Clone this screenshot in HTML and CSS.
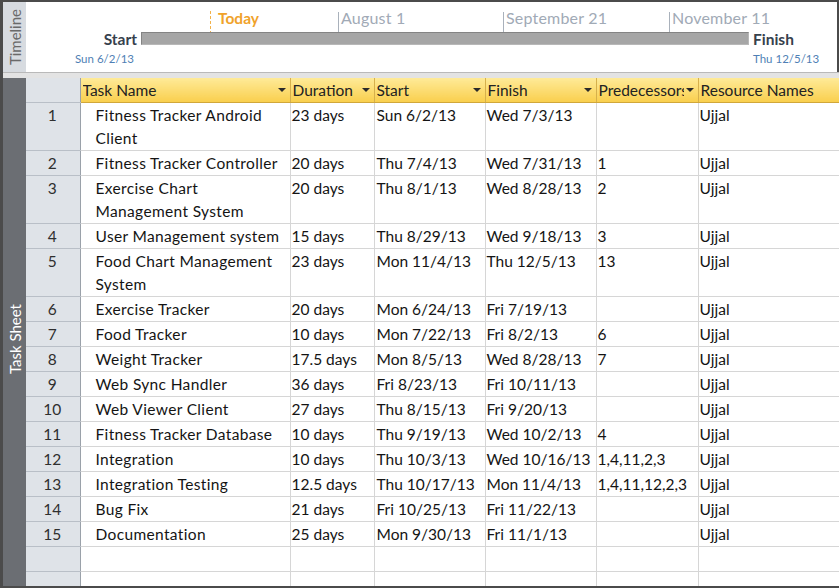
FILE: index.html
```html
<!DOCTYPE html>
<html>
<head>
<meta charset="utf-8">
<link rel="stylesheet" href="styles.css">
</head>
<body>
<div class="app">
  <div class="timeline">
    <div class="side tl-side"><span>Timeline</span></div>
    <div class="tl-canvas">
      <div class="tick today-tick" style="left:184px"></div>
      <div class="tick" style="left:312px"></div>
      <div class="tick" style="left:477px"></div>
      <div class="tick" style="left:643px"></div>
      <span class="tl-today" style="left:192px">Today</span>
      <span class="tl-month" style="left:315px">August 1</span>
      <span class="tl-month" style="left:480px">September 21</span>
      <span class="tl-month" style="left:646px">November 11</span>
      <div class="tl-bar"></div>
      <span class="tl-end tl-start">Start</span>
      <span class="tl-end tl-finish">Finish</span>
      <span class="tl-date tl-date-start">Sun 6/2/13</span>
      <span class="tl-date tl-date-finish">Thu 12/5/13</span>
    </div>
  </div>
  <div class="band"></div>
  <div class="sheet">
    <div class="side sheet-side"><span>Task Sheet</span></div>
    <div class="sheet-main">
      <table class="grid">
        <colgroup>
          <col class="c-rn"><col class="c-task"><col class="c-dur"><col class="c-start"><col class="c-fin"><col class="c-pred"><col class="c-res">
        </colgroup>
        <thead>
          <tr>
            <th class="rn"></th>
            <th><div class="hd"><span class="hd-t">Task Name</span><i class="arr"></i></div></th>
            <th><div class="hd"><span class="hd-t">Duration</span><i class="arr"></i></div></th>
            <th><div class="hd"><span class="hd-t">Start</span><i class="arr"></i></div></th>
            <th><div class="hd"><span class="hd-t">Finish</span><i class="arr"></i></div></th>
            <th><div class="hd"><span class="hd-t">Predecessors</span><i class="arr"></i></div></th>
            <th><div class="hd"><span class="hd-t">Resource Names</span></div></th>
          </tr>
        </thead>
        <tbody>
          <tr><td class="rn">1</td><td class="task">Fitness Tracker Android<br>Client</td><td>23 days</td><td>Sun 6/2/13</td><td>Wed 7/3/13</td><td></td><td>Ujjal</td></tr>
          <tr><td class="rn">2</td><td class="task">Fitness Tracker Controller</td><td>20 days</td><td>Thu 7/4/13</td><td>Wed 7/31/13</td><td>1</td><td>Ujjal</td></tr>
          <tr><td class="rn">3</td><td class="task">Exercise Chart<br>Management System</td><td>20 days</td><td>Thu 8/1/13</td><td>Wed 8/28/13</td><td>2</td><td>Ujjal</td></tr>
          <tr><td class="rn">4</td><td class="task">User Management system</td><td>15 days</td><td>Thu 8/29/13</td><td>Wed 9/18/13</td><td>3</td><td>Ujjal</td></tr>
          <tr><td class="rn">5</td><td class="task">Food Chart Management<br>System</td><td>23 days</td><td>Mon 11/4/13</td><td>Thu 12/5/13</td><td>13</td><td>Ujjal</td></tr>
          <tr><td class="rn">6</td><td class="task">Exercise Tracker</td><td>20 days</td><td>Mon 6/24/13</td><td>Fri 7/19/13</td><td></td><td>Ujjal</td></tr>
          <tr><td class="rn">7</td><td class="task">Food Tracker</td><td>10 days</td><td>Mon 7/22/13</td><td>Fri 8/2/13</td><td>6</td><td>Ujjal</td></tr>
          <tr><td class="rn">8</td><td class="task">Weight Tracker</td><td>17.5 days</td><td>Mon 8/5/13</td><td>Wed 8/28/13</td><td>7</td><td>Ujjal</td></tr>
          <tr><td class="rn">9</td><td class="task">Web Sync Handler</td><td>36 days</td><td>Fri 8/23/13</td><td>Fri 10/11/13</td><td></td><td>Ujjal</td></tr>
          <tr><td class="rn">10</td><td class="task">Web Viewer Client</td><td>27 days</td><td>Thu 8/15/13</td><td>Fri 9/20/13</td><td></td><td>Ujjal</td></tr>
          <tr><td class="rn">11</td><td class="task">Fitness Tracker Database</td><td>10 days</td><td>Thu 9/19/13</td><td>Wed 10/2/13</td><td>4</td><td>Ujjal</td></tr>
          <tr><td class="rn">12</td><td class="task">Integration</td><td>10 days</td><td>Thu 10/3/13</td><td>Wed 10/16/13</td><td>1,4,11,2,3</td><td>Ujjal</td></tr>
          <tr><td class="rn">13</td><td class="task">Integration Testing</td><td>12.5 days</td><td>Thu 10/17/13</td><td>Mon 11/4/13</td><td>1,4,11,12,2,3</td><td>Ujjal</td></tr>
          <tr><td class="rn">14</td><td class="task">Bug Fix</td><td>21 days</td><td>Fri 10/25/13</td><td>Fri 11/22/13</td><td></td><td>Ujjal</td></tr>
          <tr><td class="rn">15</td><td class="task">Documentation</td><td>25 days</td><td>Mon 9/30/13</td><td>Fri 11/1/13</td><td></td><td>Ujjal</td></tr>
          <tr><td class="rn"></td><td></td><td></td><td></td><td></td><td></td><td></td></tr>
          <tr><td class="rn"></td><td></td><td></td><td></td><td></td><td></td><td></td></tr>
        </tbody>
      </table>
      <div class="hscroll"><div class="thumb"></div></div>
    </div>
  </div>
</div>
</body>
</html>
```

FILE: styles.css
```css
* { box-sizing: border-box; }
html, body { margin: 0; padding: 0; background: #fff; }
body { font-family: Lato, "Open Sans", sans-serif; }

.app {
  width: 839px;
  height: 588px;
  display: flex;
  flex-direction: column;
  border-left: 3px solid #4b4b4b;
  border-top: 2px solid #4b4b4b;
  border-bottom: 2px solid #4b4b4b;
  overflow: hidden;
}

.timeline {
  height: 70px;
  display: flex;
  flex: none;
  border-right: 2px solid #4b4b4b;
}

.side {
  width: 23px;
  flex: none;
  display: flex;
  align-items: center;
  justify-content: center;
}
.side span {
  writing-mode: vertical-rl;
  transform: rotate(180deg);
  font-size: 15px;
  white-space: nowrap;
}
.tl-side { background: #d7dbe0; }
.tl-side span { color: #6a6a6a; }

.tl-canvas {
  position: relative;
  flex: 1;
  background: #fff;
}
.tick {
  position: absolute;
  top: 10px;
  width: 1px;
  height: 20px;
  background: #a9b1bb;
}
.today-tick {
  top: 9px;
  height: 33px;
  background: none;
  border-left: 1px dashed #f2b24a;
}
.tl-today, .tl-month {
  position: absolute;
  top: 7px;
  font-size: 15.5px;
  line-height: 18px;
  white-space: nowrap;
}
.tl-today { color: #f0a22a; font-weight: 700; }
.tl-month { color: #a1aab6; font-weight: 400; font-size: 16px; letter-spacing: 0.2px; }
.tl-bar {
  position: absolute;
  left: 115px;
  top: 30px;
  width: 608px;
  height: 13px;
  background: #a6a6a6;
  border: 1px solid #848484;
  border-right-color: #b8b8b8;
  border-bottom-color: #b8b8b8;
}
.tl-end {
  position: absolute;
  top: 28px;
  font-size: 15.5px;
  line-height: 18px;
  font-weight: 700;
  color: #36414d;
}
.tl-start { right: 700px; }
.tl-finish { left: 727px; }
.tl-date {
  position: absolute;
  top: 50px;
  font-size: 11.5px;
  line-height: 14px;
  color: #4f7fb5;
  white-space: nowrap;
}
.tl-date-start { left: 49px; }
.tl-date-finish { left: 727px; }

.band {
  height: 6px;
  flex: none;
  background: #e3e3e3;
  border-top: 1px solid #b9b9b9;
}

.sheet {
  flex: 1;
  display: flex;
  min-height: 0;
}
.sheet-side {
  background: #6b6e73;
  padding-top: 14px;
}
.sheet-side span { color: #fff; }

.sheet-main {
  flex: 1;
  display: flex;
  flex-direction: column;
  min-width: 0;
  overflow: hidden;
}

.grid {
  table-layout: fixed;
  border-collapse: collapse;
  width: 813px;
  font-size: 15.5px;
  color: #141414;
}
.c-rn { width: 54px; }
.c-task { width: 210px; }
.c-dur { width: 84px; }
.c-start { width: 111px; }
.c-fin { width: 111px; }
.c-pred { width: 102px; }
.c-res { width: 141px; }

.grid th {
  height: 24px;
  padding: 0 4px 0 2px;
  font-weight: 400;
  text-align: left;
  background: linear-gradient(#feea98, #f9cf4e);
  border-right: 1px solid #d6b04c;
  border-bottom: 1px solid #d1a73a;
  color: #222;
}
.grid th.rn {
  background: #dfe3e8;
  border-right: 1px solid #9aa1a9;
  border-bottom: 1px solid #b9bfc7;
}
.hd {
  display: flex;
  align-items: center;
  gap: 2px;
}
.hd-t {
  flex: 1;
  min-width: 0;
  overflow: hidden;
  white-space: nowrap;
}
.arr {
  flex: none;
  width: 0;
  height: 0;
  border-left: 4px solid transparent;
  border-right: 4px solid transparent;
  border-top: 4px solid #2a2a2a;
}

.grid td {
  line-height: 23px;
  padding: 1px 2px 0 1px;
  vertical-align: top;
  white-space: nowrap;
  overflow: hidden;
  border-right: 1px solid #d6d6d6;
  border-bottom: 1px solid #d6d6d6;
}
.grid td:nth-child(4) { padding-left: 2px; }
.grid td.task { padding-left: 15px; letter-spacing: 0.35px; }
.grid td.rn {
  text-align: center;
  background: #dfe3e8;
  color: #2f2f2f;
  border-right: 1px solid #9aa1a9;
  border-bottom: 1px solid #b9bfc7;
  height: 25px;
}

.hscroll {
  margin-top: auto;
  height: 3px;
  flex: none;
  background: #d9d9d9;
  border-top: 1px solid #a8a8a8;
  position: relative;
}
.thumb {
  margin-left: 21px;
  width: 20px;
  height: 3px;
  background: #fff;
  border: 1px solid #b5b5b5;
  border-bottom: none;
}
```
